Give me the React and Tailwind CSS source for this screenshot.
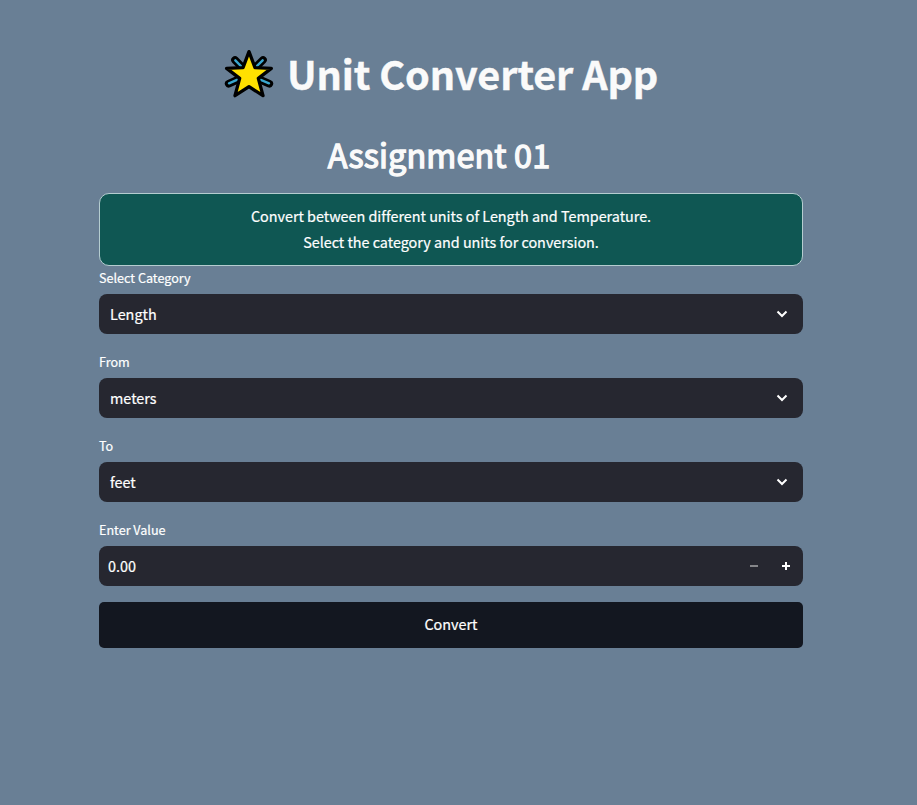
const selects = [
  { label: 'Select Category', value: 'Length' },
  { label: 'From', value: 'meters' },
  { label: 'To', value: 'feet' },
];

function Star() {
  return (
    <svg className="h-[50px] w-[50px] shrink-0" viewBox="18 15 150 150">
      <g strokeLinecap="round">
        <path d="M51 48 92 90M135 48 92 90M32 119 92 92M154 119 92 92" stroke="#000" strokeWidth="23" />
        <path d="M52 49 92 90M134 49 92 90M33 118 92 92M153 118 92 92" stroke="#3aa7cf" strokeWidth="7" />
      </g>
      <path d="M93 23 111 71 160 73 121 103 135 155 93 128 51 155 65 103 26 73 75 71Z" fill="#ffe000" stroke="#000" strokeWidth="10" strokeLinejoin="round" />
    </svg>
  );
}

export default function App() {
  return (
    <main className="min-h-[805px] bg-[#697f95] font-['Noto_Sans_CJK_SC',sans-serif] text-white">
      <div className="ml-[99px] w-[704px] pt-[48px]">
        <h1 className="ml-[125px] flex h-[52px] items-center gap-[13px] text-[39.6px] font-bold tracking-[-0.1px] whitespace-nowrap text-[#fafafa] [-webkit-text-stroke:0.4px]">
          <Star />
          <span className="pb-[3px]">Unit Converter App</span>
        </h1>
        <h2 className="mt-[30px] flex h-[48px] items-center justify-center pr-6 text-[32.4px] font-normal tracking-[0.12px] text-[#fafafa] [-webkit-text-stroke:1.3px]">Assignment 01</h2>
        <div className="mt-[15px] flex h-[73px] flex-col justify-center rounded-[10px] border border-[#b5cdd0] bg-[#0f5753] pb-[2px] text-center text-[14.4px] leading-[26px] tracking-[-0.02px] [-webkit-text-stroke:0.2px]">
          <p>Convert between different units of Length and Temperature.</p>
          <p>Select the category and units for conversion.</p>
        </div>
        {selects.map((s) => (
          <div key={s.label} className="mb-4">
            <div className="flex h-7 items-center pb-[3px] text-[12.6px] [-webkit-text-stroke:0.2px]">{s.label}</div>
            <div className="flex h-10 items-center justify-between rounded-lg bg-[#262730] pr-[15px] pl-[11px] text-[14.4px] [-webkit-text-stroke:0.2px]">
              <span>{s.value}</span>
              <svg width="12" height="8" viewBox="0 0 12 8" fill="none" stroke="#fff" strokeWidth="2"><path d="M1.5 1.5 6 6 10.5 1.5" /></svg>
            </div>
          </div>
        ))}
        <div className="flex h-7 items-center pb-[3px] text-[12.6px] [-webkit-text-stroke:0.2px]">Enter Value</div>
        <div className="flex h-10 items-center justify-between rounded-lg bg-[#262730] pr-3 pl-[9px] text-[14.4px] [-webkit-text-stroke:0.2px]">
          <span>0.00</span>
          <svg width="42" height="10" viewBox="0 0 42 10" strokeWidth="2"><path d="M1 5H9" stroke="#85868a" /><path d="M33 5H41M37 1V9" stroke="#fff" /></svg>
        </div>
        <button className="mt-4 block h-[46px] w-full rounded-[5px] bg-[#131720] pb-[2px] text-[14.4px] [-webkit-text-stroke:0.2px]">Convert</button>
      </div>
    </main>
  );
}
